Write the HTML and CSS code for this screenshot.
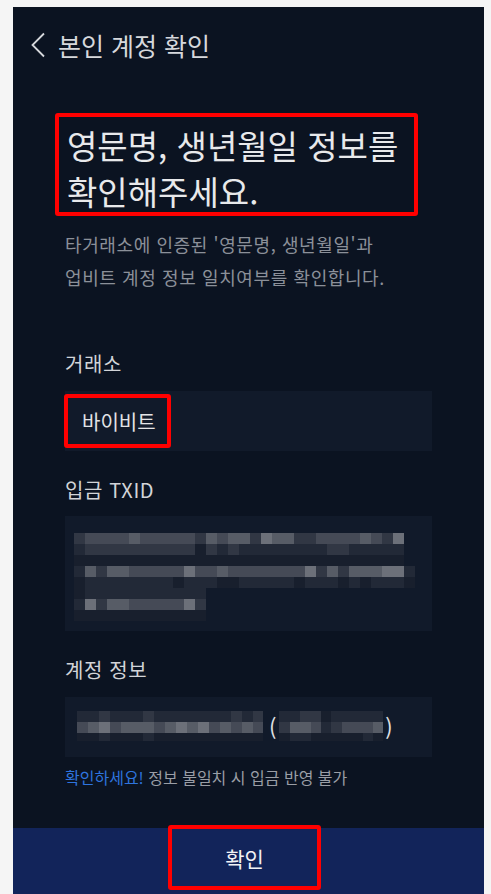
FILE: index.html
```html
<!DOCTYPE html>
<html lang="ko">
<head>
<meta charset="utf-8">
<title>본인 계정 확인</title>
<link rel="stylesheet" href="styles.css">
</head>
<body>
<div class="panel">
  <header class="topbar">
    <svg class="back" width="16" height="26" viewBox="0 0 16 26"><path d="M14 1.5 L2.5 13 L14 24.5" fill="none" stroke="#d6d8dc" stroke-width="1.8"/></svg>
    <span class="title">본인 계정 확인</span>
  </header>
  <main class="content">
    <h1 class="headline">영문명, 생년월일 정보를<br>확인해주세요.</h1>
    <p class="desc">타거래소에 인증된 '영문명, 생년월일'과<br>업비트 계정 정보 일치여부를 확인합니다.</p>

    <div class="label l-first">거래소</div>
    <div class="field exch-field">
      <span class="exch">바이비트</span>
    </div>

    <div class="label">입금 TXID</div>
    <div class="field tx">
      <div class="mrow"><i class="c3"></i><i class="c4"></i><i class="c4"></i><i class="c4"></i><i class="c4"></i><i class="c5"></i><i class="c4"></i><i class="c4"></i><i class="c4"></i><i class="c4"></i><i class="c4"></i><i class="c3"></i><i class="c5"></i><i class="c4"></i><i class="c5"></i><i class="c5"></i><i class="c3"></i><i class="c6"></i><i class="c5"></i><i class="c5"></i><i class="c3"></i><i class="c3"></i><i class="c4"></i><i class="c4"></i><i class="c4"></i><i class="c4"></i><i class="c5"></i><i class="c4"></i><i class="c3"></i><i class="c6"></i></div>
      <div class="mrow"><i class="c2"></i><i class="c3"></i><i class="c3"></i><i class="c3"></i><i class="c3"></i><i class="c3"></i><i class="c3"></i><i class="c3"></i><i class="c3"></i><i class="c3"></i><i class="c3"></i><i class="c1"></i><i class="c3"></i><i class="c2"></i><i class="c3"></i><i class="c2"></i><i class="c2"></i><i class="c2"></i><i class="c2"></i><i class="c2"></i><i class="c2"></i><i class="c2"></i><i class="c2"></i><i class="c3"></i><i class="c3"></i><i class="c2"></i><i class="c2"></i><i class="c2"></i><i class="c2"></i><i class="c2"></i></div>
      <div class="mrow"><i class="c1"></i><i class="c1"></i><i class="c1"></i><i class="c1"></i><i class="c1"></i><i class="c1"></i><i class="c1"></i><i class="c1"></i><i class="c1"></i><i class="c1"></i><i class="c1"></i><i class="c1"></i><i class="c1"></i><i class="c1"></i><i class="c1"></i><i class="c1"></i><i class="c1"></i><i class="c1"></i><i class="c1"></i><i class="c1"></i><i class="c1"></i><i class="c1"></i><i class="c1"></i><i class="c1"></i><i class="c1"></i><i class="c1"></i><i class="c1"></i><i class="c1"></i><i class="c1"></i><i class="c1"></i></div>
      <div class="mrow"><i class="c2"></i><i class="c5"></i><i class="c3"></i><i class="c5"></i><i class="c5"></i><i class="c4"></i><i class="c4"></i><i class="c4"></i><i class="c4"></i><i class="c4"></i><i class="c6"></i><i class="c4"></i><i class="c4"></i><i class="c5"></i><i class="c4"></i><i class="c4"></i><i class="c4"></i><i class="c4"></i><i class="c4"></i><i class="c4"></i><i class="c4"></i><i class="c6"></i><i class="c3"></i><i class="c5"></i><i class="c3"></i><i class="c5"></i><i class="c5"></i><i class="c5"></i><i class="c6"></i><i class="c6"></i><i class="c2"></i></div>
      <div class="mrow"><i class="c1"></i><i class="c2"></i><i class="c2"></i><i class="c2"></i><i class="c2"></i><i class="c2"></i><i class="c2"></i><i class="c2"></i><i class="c2"></i><i class="c1"></i><i class="c2"></i><i class="c2"></i><i class="c2"></i><i class="c1"></i><i class="c1"></i><i class="c2"></i><i class="c2"></i><i class="c2"></i><i class="c2"></i><i class="c2"></i><i class="c1"></i><i class="c2"></i><i class="c2"></i><i class="c2"></i><i class="c1"></i><i class="c2"></i><i class="c1"></i><i class="c2"></i><i class="c2"></i><i class="c2"></i><i class="c1"></i></div>
      <div class="mrow"><i class="c1"></i><i class="c2"></i><i class="c2"></i><i class="c2"></i><i class="c2"></i><i class="c2"></i><i class="c2"></i><i class="c2"></i><i class="c2"></i><i class="c2"></i><i class="c2"></i><i class="c2"></i></div>
      <div class="mrow"><i class="c2"></i><i class="c6"></i><i class="c3"></i><i class="c5"></i><i class="c5"></i><i class="c4"></i><i class="c4"></i><i class="c4"></i><i class="c4"></i><i class="c4"></i><i class="c6"></i><i class="c3"></i></div>
      <div class="mrow"><i class="c1"></i><i class="c1"></i><i class="c1"></i><i class="c1"></i><i class="c1"></i><i class="c1"></i><i class="c1"></i><i class="c1"></i><i class="c1"></i><i class="c1"></i><i class="c1"></i><i class="c1"></i></div>
    </div>

    <div class="label">계정 정보</div>
    <div class="field acct">
      <div class="mosaic m1">
        <div class="mrow"><i class="c2"></i><i class="c2"></i><i class="c3"></i><i class="c2"></i><i class="c2"></i><i class="c2"></i><i class="c3"></i><i class="c2"></i><i class="c2"></i><i class="c2"></i><i class="c2"></i><i class="c2"></i><i class="c2"></i><i class="c2"></i><i class="c3"></i><i class="c2"></i><i class="c3 n"></i></div>
        <div class="mrow"><i class="c4"></i><i class="c5"></i><i class="c6"></i><i class="c4"></i><i class="c5"></i><i class="c5"></i><i class="c5"></i><i class="c4"></i><i class="c5"></i><i class="c6"></i><i class="c5"></i><i class="c6"></i><i class="c4"></i><i class="c5"></i><i class="c4"></i><i class="c5"></i><i class="c4 n"></i></div>
        <div class="mrow short"><i class="c1"></i><i class="c1"></i><i class="c2"></i><i class="c1"></i><i class="c1"></i><i class="c1"></i><i class="c2"></i><i class="c1"></i><i class="c1"></i><i class="c1"></i><i class="c1"></i><i class="c1"></i><i class="c1"></i><i class="c1"></i><i class="c1"></i><i class="c1"></i><i class="c1 n"></i></div>
      </div>
      <span class="paren">(</span>
      <div class="mosaic m2">
        <div class="mrow"><i class="c2"></i><i class="c2"></i><i class="c3"></i><i class="c3"></i><i class="c1"></i><i class="c2"></i><i class="c2"></i><i class="c2"></i><i class="c2"></i><i class="c2"></i></div>
        <div class="mrow"><i class="c3"></i><i class="c5"></i><i class="c5"></i><i class="c4"></i><i class="c2"></i><i class="c3"></i><i class="c4"></i><i class="c4"></i><i class="c4"></i><i class="c5"></i></div>
        <div class="mrow short"><i class="c1"></i><i class="c2"></i><i class="c2"></i><i class="c1"></i><i class="c1"></i><i class="c1"></i><i class="c1"></i><i class="c1"></i><i class="c2"></i><i class="c1"></i></div>
      </div>
      <span class="paren close">)</span>
    </div>

    <p class="warn"><span class="warn-blue">확인하세요!</span> 정보 불일치 시 입금 반영 불가</p>
  </main>
  <footer class="bottombar">
    <button class="confirm">확인</button>
  </footer>
</div>
</body>
</html>
```
FILE: styles.css
```css
* { box-sizing: border-box; }
html, body { margin: 0; padding: 0; }
body {
  background: #f5f5f5;
  font-family: "Noto Sans CJK KR", "Noto Sans", sans-serif;
  width: 491px;
  height: 894px;
  overflow: hidden;
}
.panel {
  margin: 7px 0 0 13px;
  width: 471px;
  height: 887px;
  background: #0b1321;
  display: flex;
  flex-direction: column;
}
.topbar {
  height: 76px;
  display: flex;
  align-items: center;
  padding-left: 17px;
  gap: 12px;
}
.back { display: block; }
.title {
  color: #d6d8dc;
  font-size: 25px;
  line-height: 30px;
}
.content {
  padding: 0 52px;
  display: flex;
  flex-direction: column;
  align-items: flex-start;
}
.headline {
  margin: 30px 0 0 -10px;
  width: 363px;
  height: 103px;
  border: 4px solid #ff0000;
  border-radius: 3px;
  padding: 5px 0 0 8px;
  font-size: 33px;
  font-weight: 400;
  line-height: 46px;
  color: #e8e9eb;
  white-space: nowrap;
}
.desc {
  margin: 12px 0 0;
  font-size: 18px;
  letter-spacing: 0.6px;
  line-height: 33px;
  color: #8b9099;
}
.label {
  margin-top: 26px;
  font-size: 20px;
  letter-spacing: 0.6px;
  line-height: 26px;
  color: #d2d4d8;
}
.label.l-first { margin-top: 57px; }
.field {
  margin-top: 13px;
  width: 367px;
  background: #111a2a;
}
.exch-field {
  margin-top: 14px;
  height: 60px;
  display: flex;
  align-items: center;
}
.exch {
  margin-left: -1px;
  height: 54px;
  width: 107px;
  border: 4px solid #ff0000;
  border-radius: 3px;
  padding-left: 14px;
  display: flex;
  align-items: center;
  font-size: 20px;
  color: #e2e3e6;
  white-space: nowrap;
}
.tx {
  height: 115px;
  padding: 17px 0 0 9px;
}
.mrow { display: flex; height: 11px; }
.mrow i { display: block; width: 11px; height: 11px; flex: none; }
.mrow.short, .mrow.short i { height: 8px; }
.c1 { background: #181f2d; }
.c2 { background: #222937; }
.c3 { background: #313744; }
.c4 { background: #454a56; }
.c5 { background: #575c66; }
.c6 { background: #6c7079; }
.acct {
  margin-top: 14px;
  height: 60px;
  display: flex;
  align-items: center;
  padding-left: 12px;
}
.mosaic { margin-top: -2px; }
.m1 .mrow i.n { width: 10px; }
.m2 .mrow i { width: 10.4px; }
.paren {
  color: #e0e1e4;
  font-size: 22px;
  line-height: 26px;
  margin: -2px 3px 0 6px;
}
.paren.close { margin: -2px 0 0 2px; }
.warn {
  margin: 9px 0 0;
  font-size: 16px;
  line-height: 22px;
  color: #9a9ea6;
  white-space: nowrap;
}
.warn-blue { color: #2e74de; }
.bottombar {
  margin-top: auto;
  height: 66px;
  background: #12245a;
  display: flex;
  justify-content: center;
  align-items: flex-start;
}
.confirm {
  margin-top: -3px;
  margin-left: -8px;
  width: 153px;
  height: 65px;
  border: 4px solid #ff0000;
  border-radius: 3px;
  background: transparent;
  color: #f2f3f5;
  font-family: inherit;
  font-size: 21px;
  padding: 0;
}
```
